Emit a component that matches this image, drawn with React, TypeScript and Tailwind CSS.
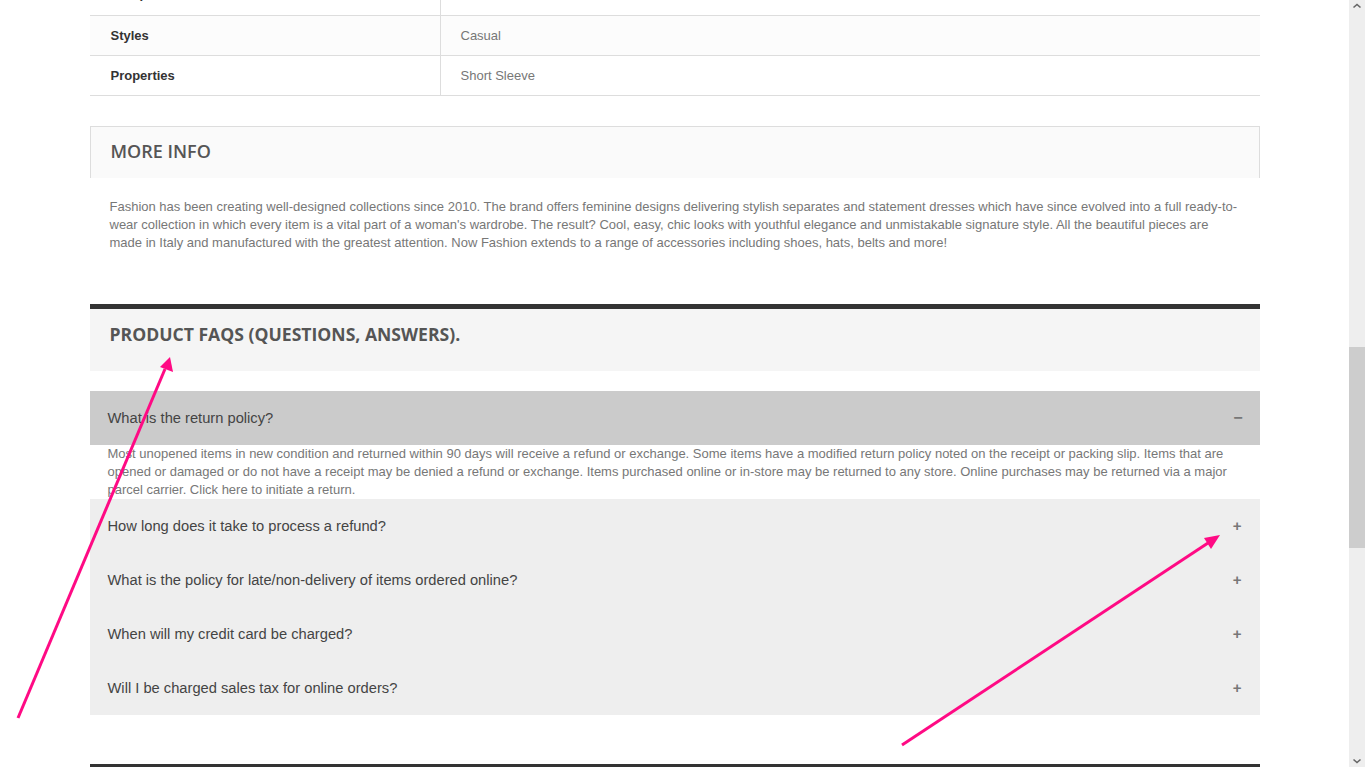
import React from "react";

const arial = { fontFamily: '"Liberation Sans", Arial, sans-serif' };

const faqs = [
  "How long does it take to process a refund?",
  "What is the policy for late/non-delivery of items ordered online?",
  "When will my credit card be charged?",
  "Will I be charged sales tax for online orders?",
];

function Row({ label, value, striped, h = "h-[40px]" }: { label: string; value: string; striped?: boolean; h?: string }) {
  return (
    <div className={`flex ${h} border-b border-[#dddddd] ${striped ? "bg-[#fcfcfc]" : "bg-white"}`}>
      <div className="w-[351px] shrink-0 border-r border-[#dddddd] flex items-center pl-[21px] text-[13px] font-bold text-[#333333]">
        {label}
      </div>
      <div className="flex-1 flex items-center pl-[20px] text-[13px] text-[#777777]">{value}</div>
    </div>
  );
}

export default function App() {
  return (
    <div className="relative flex h-[767px] w-[1365px] overflow-hidden bg-white" style={arial}>
      <div className="flex-1 min-w-0">
        <div className="mx-auto w-[1170px]">
          {/* partial row */}
          <div className="flex h-[16px] border-b border-[#dddddd] overflow-hidden">
            <div className="w-[351px] shrink-0 border-r border-[#dddddd] pl-[21px] text-[13px] font-bold text-[#333333] leading-[16px]">
              <div className="-mt-[14px]">Compositions</div>
            </div>
            <div className="flex-1" />
          </div>
          <Row label="Styles" value="Casual" striped />
          <Row label="Properties" value="Short Sleeve" />

          {/* more info */}
          <div className="mt-[30px] h-[52px] border border-b-0 border-[#dddddd] bg-[#fafafa] flex items-center pl-[20px]">
            <h3 className="-mt-[2px] text-[18px] font-semibold text-[#555555]" style={{ fontFamily: '"Open Sans", sans-serif' }}>
              MORE INFO
            </h3>
          </div>
          <p className="px-[20px] pt-[20px] text-[13px] leading-[18px] text-[#777777] whitespace-nowrap">
            Fashion has been creating well-designed collections since 2010. The brand offers feminine designs delivering stylish separates and statement dresses which have since evolved into a full ready-to-
            <br />
            wear collection in which every item is a vital part of a woman's wardrobe. The result? Cool, easy, chic looks with youthful elegance and unmistakable signature style. All the beautiful pieces are
            <br />
            made in Italy and manufactured with the greatest attention. Now Fashion extends to a range of accessories including shoes, hats, belts and more!
          </p>

          {/* FAQ */}
          <div className="mt-[52px] h-[5px] bg-[#333333]" />
          <div className="h-[62px] bg-[#f5f5f5] pl-[20px] pt-[13px]">
            <h3
              className="text-[17.6px] leading-[25px] font-bold text-[#555555]"
              style={{ fontFamily: '"Open Sans", sans-serif' }}
            >
              PRODUCT FAQS (QUESTIONS, ANSWERS).
            </h3>
          </div>

          <div className="mt-[20px]">
            <div className="h-[54px] bg-[#cbcbcb] flex items-center justify-between pl-[18px] pr-[17px]">
              <span className="mt-[1px] text-[14.7px] text-[#444444]">What is the return policy?</span>
              <span className="text-[16px] font-bold text-[#777777]">−</span>
            </div>
            <div className="px-[18px] text-[13px] leading-[18px] text-[#777777] whitespace-nowrap">
              Most unopened items in new condition and returned within 90 days will receive a refund or exchange. Some items have a modified return policy noted on the receipt or packing slip. Items that are
              <br />
              opened or damaged or do not have a receipt may be denied a refund or exchange. Items purchased online or in-store may be returned to any store. Online purchases may be returned via a major
              <br />
              parcel carrier. Click here to initiate a return.
            </div>
            <div className="bg-[#eeeeee]">
              {faqs.map((q) => (
                <div key={q} className="h-[54px] flex items-center justify-between pl-[18px] pr-[18px]">
                  <span className="mt-[1px] text-[14.7px] text-[#444444]">{q}</span>
                  <span className="text-[15px] font-bold text-[#777777]">+</span>
                </div>
              ))}
            </div>
          </div>
          <div className="mt-[49px] h-[5px] bg-[#333333]" />
        </div>
      </div>

      {/* scrollbar */}
      <div className="w-[16px] shrink-0 bg-[#eeeeee] flex flex-col items-center">
        <svg width="10" height="10" viewBox="0 0 10 10" className="mt-[1px]">
          <path d="M1.5 6.5 L5 3.5 L8.5 6.5" stroke="#666" strokeWidth="1.6" fill="none" />
        </svg>
        <div className="mt-[336px] h-[201px] w-full bg-[#cdcdcd]" />
        <div className="flex-1" />
        <svg width="10" height="10" viewBox="0 0 10 10" className="mb-[1px]">
          <path d="M1.5 3.5 L5 6.5 L8.5 3.5" stroke="#666" strokeWidth="1.6" fill="none" />
        </svg>
      </div>

      {/* annotation arrows */}
      <svg className="pointer-events-none absolute left-0 top-0" width="1365" height="767" viewBox="0 0 1365 767">
        <line x1="18" y1="718" x2="165" y2="369" stroke="#ff0a84" strokeWidth="3" />
        <polygon points="170,357 173,372 160,367" fill="#ff0a84" />
        <line x1="902" y1="745" x2="1208" y2="543" stroke="#ff0a84" strokeWidth="3" />
        <polygon points="1220,535 1211,549 1204,538" fill="#ff0a84" />
      </svg>
    </div>
  );
}
